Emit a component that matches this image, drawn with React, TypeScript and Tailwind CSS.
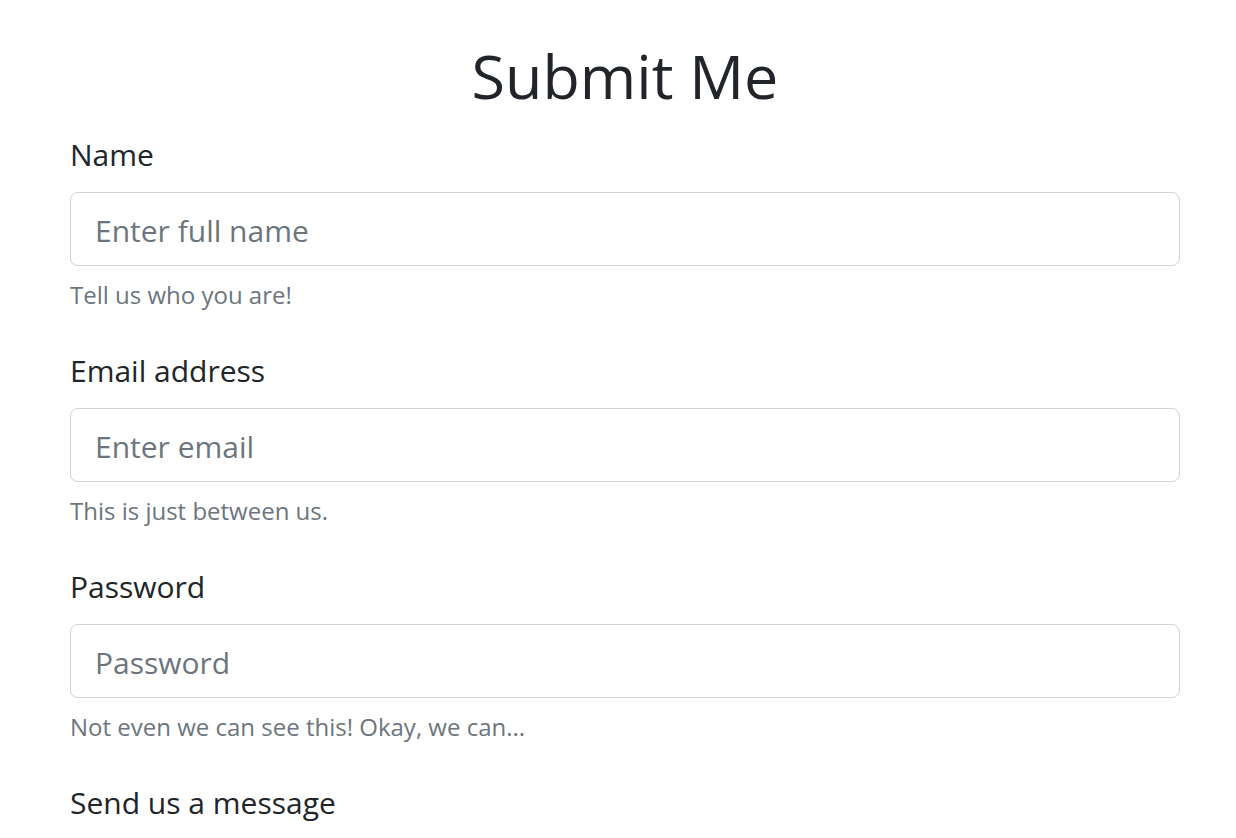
const fields = [
  { id: "name", label: "Name", type: "text", placeholder: "Enter full name", hint: "Tell us who you are!" },
  { id: "email", label: "Email address", type: "email", placeholder: "Enter email", hint: "This is just between us." },
  { id: "password", label: "Password", type: "password", placeholder: "Password", hint: "Not even we can see this! Okay, we can..." },
];

export default function App() {
  return (
    <main className="h-screen overflow-hidden bg-white pl-[70px] pr-14 pt-10 font-['Open_Sans','Noto_Sans',sans-serif] text-[#212529]">
      <h1 className="mb-5 text-center text-[61px] leading-[72px]">Submit Me</h1>
      <form>
        {fields.map((f) => (
          <div key={f.id} className="mb-[34px]">
            <label htmlFor={f.id} className="mb-3.5 block text-[30px] leading-[46px]">{f.label}</label>
            <input
              id={f.id}
              type={f.type}
              placeholder={f.placeholder}
              aria-describedby={f.id + "-hint"}
              className="block h-[74px] w-full rounded-lg border border-[#ced4da] bg-white px-6 pt-0.5 text-[30px] placeholder:text-[#6c757d]"
            />
            <small id={f.id + "-hint"} className="mt-2.5 block text-2xl leading-[38px] text-[#6c757d]">{f.hint}</small>
          </div>
        ))}
        <label htmlFor="message" className="mb-3.5 block text-[30px] leading-[46px]">Send us a message</label>
        <textarea id="message" rows={3} className="block w-full rounded-lg border border-[#ced4da] px-6 py-3 text-[30px]" />
      </form>
    </main>
  );
}
